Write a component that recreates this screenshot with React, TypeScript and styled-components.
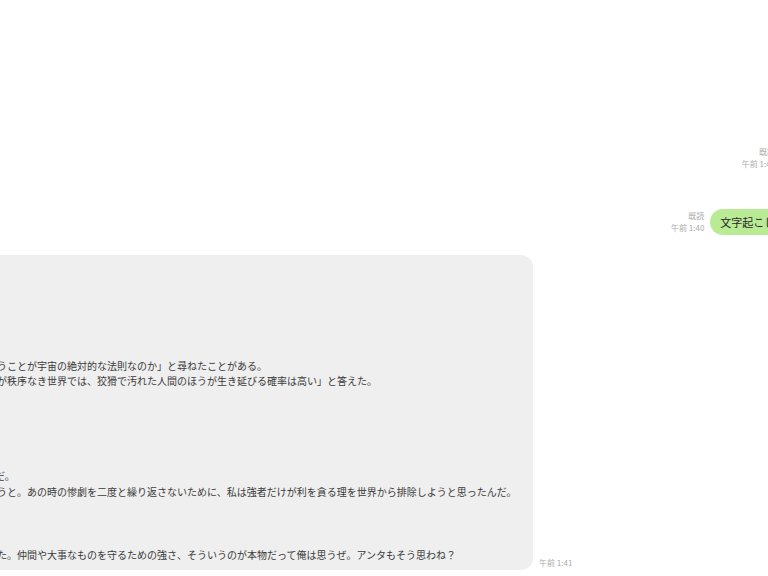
import React from 'react';
import styled, { createGlobalStyle } from 'styled-components';

const Global = createGlobalStyle`
	html, body {
		margin: 0;
		padding: 0;
		background: #ffffff;
		overflow: hidden;
	}
	body {
		font-family: "Noto Sans CJK JP", "Noto Sans", sans-serif;
	}
`;

const LINE = 15.75;

const Page = styled.div`
	width: 768px;
	height: 576px;
	overflow: hidden;
	display: flex;
	flex-direction: column;
	padding-top: 145px;
	box-sizing: border-box;
`;

const Row = styled.div<{ $side: 'left' | 'right'; $top: number; $pull?: number }>`
	display: flex;
	align-items: flex-end;
	flex-shrink: 0;
	gap: 6px;
	justify-content: ${({ $side }) => ($side === 'right' ? 'flex-end' : 'flex-start')};
	margin-top: ${({ $top }) => $top}px;
	margin-right: ${({ $pull = 0 }) => -$pull}px;
	margin-left: ${({ $side }) => ($side === 'left' ? -20 : 0)}px;
`;

const Meta = styled.div<{ $align: 'left' | 'right' }>`
	display: flex;
	flex-direction: column;
	align-items: ${({ $align }) => ($align === 'right' ? 'flex-end' : 'flex-start')};
	font-size: 8px;
	line-height: 12px;
	color: #ababab;
	white-space: nowrap;
	padding-bottom: 1px;
`;

const GreenBubble = styled.div`
	background: #b9eb94;
	border-radius: 13px;
	height: 26px;
	padding: 0 10px;
	display: flex;
	align-items: center;
	font-size: 11px;
	color: #2a2a2a;
	white-space: nowrap;
`;

const GrayBubble = styled.div`
	width: 553px;
	flex-shrink: 0;
	box-sizing: border-box;
	background: #efefef;
	border-radius: 12px;
	padding: 8px 0 8px 17px;
	font-size: 10px;
	color: #3a3a3a;
`;

const Line = styled.div<{ $shift?: number }>`
	height: ${LINE}px;
	line-height: ${LINE}px;
	white-space: nowrap;
	margin-left: ${({ $shift = 0 }) => $shift}px;
`;

const Spacer = styled.div<{ $lines: number }>`
	height: ${({ $lines }) => $lines * LINE}px;
`;

export default function App() {
	return (
		<>
			<Global />
			<Page>
				<Row $side="right" $top={0} $pull={88}>
					<Meta $align="right">
						<span>既読</span>
						<span>午前 1:40</span>
					</Meta>
					<GreenBubble>ありがとう</GreenBubble>
				</Row>
				<Row $side="right" $top={38} $pull={39}>
					<Meta $align="right">
						<span>既読</span>
						<span>午前 1:40</span>
					</Meta>
					<GreenBubble>文字起こしして</GreenBubble>
				</Row>
				<Row $side="left" $top={20}>
					<GrayBubble>
						<Spacer $lines={6} />
						<Line>うことが宇宙の絶対的な法則なのか」と尋ねたことがある。</Line>
						<Line>が秩序なき世界では、狡猾で汚れた人間のほうが生き延びる確率は高い」と答えた。</Line>
						<Spacer $lines={5} />
						<Line $shift={-2}>だ。</Line>
						<Line>うと。あの時の惨劇を二度と繰り返さないために、私は強者だけが利を貪る理を世界から排除しようと思ったんだ。</Line>
						<Spacer $lines={3} />
						<Line>た。仲間や大事なものを守るための強さ、そういうのが本物だって俺は思うぜ。アンタもそう思わね？</Line>
					</GrayBubble>
					<Meta $align="left">
						<span>午前 1:41</span>
					</Meta>
				</Row>
			</Page>
		</>
	);
}
